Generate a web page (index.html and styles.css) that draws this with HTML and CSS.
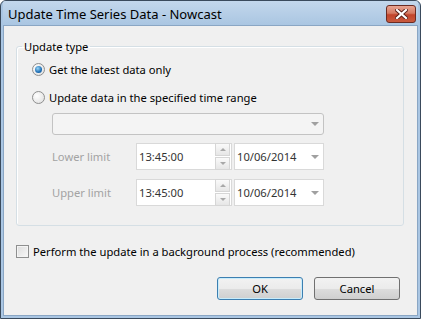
FILE: index.html
```html
<!DOCTYPE html>
<html lang="en">
<head>
    <meta charset="UTF-8">
    <title>Update Time Series Data - Nowcast</title>
    <link rel="stylesheet" href="styles.css">
</head>
<body>
    <div class="window">
        <!-- Title bar -->
        <div class="titlebar">
            <span class="title">Update Time Series Data - Nowcast</span>
            <div class="close-btn">
                <svg width="13" height="10" viewBox="0 0 13 10">
                    <path d="M2 1 L11 9 M11 1 L2 9" stroke="#5a2019" stroke-width="4" stroke-linecap="square"/>
                    <path d="M2 1 L11 9 M11 1 L2 9" stroke="#fff" stroke-width="2.2" stroke-linecap="square"/>
                </svg>
            </div>
        </div>

        <div class="content">
            <fieldset class="group">
                <legend>Update type</legend>

                <div class="radio-row">
                    <span class="radio checked"><span class="dot"></span></span>
                    <span>Get the latest data only</span>
                </div>
                <div class="radio-row">
                    <span class="radio"></span>
                    <span>Update data in the specified time range</span>
                </div>

                <div class="range">
                    <div class="combo wide">
                        <span class="text"></span>
                        <span class="arrow"></span>
                    </div>
                    <div class="limit-row">
                        <span class="limit-label">Lower limit</span>
                        <div class="spin">
                            <span class="text">13:45:00</span>
                            <div class="spin-btns">
                                <span class="spin-btn"><span class="up"></span></span>
                                <span class="spin-btn"><span class="down"></span></span>
                            </div>
                        </div>
                        <div class="combo date">
                            <span class="text">10/06/2014</span>
                            <span class="arrow"></span>
                        </div>
                    </div>
                    <div class="limit-row">
                        <span class="limit-label">Upper limit</span>
                        <div class="spin">
                            <span class="text">13:45:00</span>
                            <div class="spin-btns">
                                <span class="spin-btn"><span class="up"></span></span>
                                <span class="spin-btn"><span class="down"></span></span>
                            </div>
                        </div>
                        <div class="combo date">
                            <span class="text">10/06/2014</span>
                            <span class="arrow"></span>
                        </div>
                    </div>
                </div>
            </fieldset>

            <div class="check-row">
                <span class="checkbox"></span>
                <span>Perform the update in a background process (recommended)</span>
            </div>

            <div class="buttons">
                <div class="button default">OK</div>
                <div class="button">Cancel</div>
            </div>
        </div>
    </div>
</body>
</html>
```

FILE: styles.css
```css
body {
    margin: 0;
    font-family: "Noto Sans", "Open Sans", sans-serif;
    font-size: 11.2px;
    color: #000;
    background: #fff;
}
.window {
    width: 421px;
    height: 319px;
    box-sizing: border-box;
    border: 1px solid #3a4a5c;
    border-radius: 6px 6px 0 0;
    background: #aac6e3;
    padding: 0 2px 2px 2px;
    display: flex;
    flex-direction: column;
    overflow: hidden;
}
.titlebar {
    height: 24px;
    display: flex;
    align-items: center;
    justify-content: space-between;
    background: linear-gradient(#c3d7ec, #aac6e2);
    padding: 0 2px 0 5px;
}
.title {
    font-size: 13px;
    color: #000;
    margin-top: 2px;
}
.close-btn {
    width: 28px;
    height: 16px;
    margin-top: 2px;
    border: 1px solid #6b2b22;
    border-radius: 3px;
    background: linear-gradient(#e8a492, #d47a63 45%, #c2442b 55%, #c85a3e);
    display: flex;
    align-items: center;
    justify-content: center;
}
.content {
    flex: 1;
    background: #f0f0f0;
    border: 1px solid #8aa6c4;
    padding: 13px 13px 0 12px;
    display: flex;
    flex-direction: column;
}
.group {
    margin: 0;
    border: 1px solid #d5dfe5;
    border-radius: 3px;
    padding: 5px 0 19px 15px;
    box-shadow: inset 1px 1px 0 #fff;
}
.group legend {
    padding: 0 2px;
    margin-left: -10px;
    line-height: 15px;
}
.radio-row {
    height: 20px;
    display: flex;
    align-items: center;
    gap: 4px;
    margin-bottom: 8px;
}
.radio {
    width: 11px;
    height: 11px;
    border: 1px solid #8e8f8f;
    border-radius: 50%;
    background: radial-gradient(circle at 35% 35%, #fff, #dcdcdc);
    display: flex;
    align-items: center;
    justify-content: center;
}
.radio .dot {
    width: 7px;
    height: 7px;
    border-radius: 50%;
    background: radial-gradient(circle at 40% 35%, #9ad6f7, #1f6fb5 60%, #0c4d8c);
}
.range {
    margin-left: 20px;
    margin-top: -2px;
    display: flex;
    flex-direction: column;
    gap: 8px;
    width: 272px;
}
.combo, .spin {
    box-sizing: border-box;
    display: flex;
    align-items: center;
    background: #fff;
    border: 1px solid #d9d9d9;
}
.combo.wide {
    height: 22px;
    background: #f4f4f4;
    border-color: #c3c3c3;
    border-radius: 3px;
}
.text {
    flex: 1;
    padding-left: 2px;
    color: #333;
}
.arrow {
    width: 0;
    height: 0;
    border-left: 4px solid transparent;
    border-right: 4px solid transparent;
    border-top: 4px solid #a0a0a0;
    margin-right: 4px;
}
.limit-row {
    display: flex;
    align-items: center;
    height: 27px;
}
.limit-row + .limit-row {
    margin-top: 1px;
}
.limit-label {
    width: 84px;
    color: #a3a3a3;
}
.spin {
    width: 96px;
    height: 27px;
    padding-right: 1px;
}
.spin-btns {
    display: flex;
    flex-direction: column;
    gap: 1px;
}
.spin-btn {
    width: 13px;
    height: 11px;
    border: 1px solid #d6d6d6;
    background: linear-gradient(#fafafa, #e6e6e6);
    display: flex;
    align-items: center;
    justify-content: center;
}
.up, .down {
    width: 0;
    height: 0;
    border-left: 3px solid transparent;
    border-right: 3px solid transparent;
}
.up { border-bottom: 3px solid #a8a8a8; }
.down { border-top: 3px solid #a8a8a8; }
.combo.date {
    width: 90px;
    height: 27px;
    margin-left: 2px;
}
.check-row {
    display: flex;
    align-items: center;
    gap: 4px;
    height: 16px;
    margin-top: 17px;
}
.checkbox {
    width: 11px;
    height: 11px;
    border: 1px solid #8e8f8f;
    background: linear-gradient(135deg, #dcdcdc, #f8f8f8);
    box-shadow: inset 0 0 0 1px #f4f4f4;
}
.buttons {
    display: flex;
    justify-content: flex-end;
    gap: 11px;
    margin-top: 18px;
    padding-right: 4px;
}
.button {
    width: 86px;
    height: 23px;
    box-sizing: border-box;
    border: 1px solid #707070;
    border-radius: 3px;
    background: linear-gradient(#f2f2f2, #ebebeb 50%, #dddddd 51%, #cfcfcf);
    display: flex;
    align-items: center;
    justify-content: center;
}
.button.default {
    border-color: #3c7fb1;
    box-shadow: inset 0 0 0 1px #c8ecfb;
}
```
